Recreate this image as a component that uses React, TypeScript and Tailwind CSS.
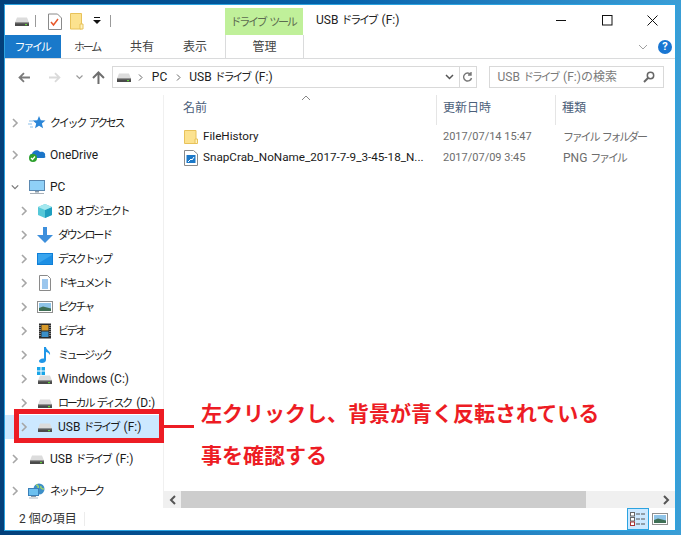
import React from "react";

const T = ({ children }: { children: string }) => (
  <>
    {children.split(/([\u30a0-\u30ff]+(?: [\u30a0-\u30ff]+)*)/).map((p, i) =>
      i % 2 === 1 ? (
        <span key={i} className="text-[11px] tracking-[-2.2px] [word-spacing:3px] pr-[2px]">
          {p}
        </span>
      ) : (
        <span key={i}>{p}</span>
      )
    )}
  </>
);

const Drive = ({ className = "" }: { className?: string }) => (
  <svg width="16" height="16" viewBox="0 0 16 16" className={className}>
    <path d="M3 4.500h10l2 5H1z" fill="#dcdcdc" />
    <path d="M1 9.500h14v3.500H1z" fill="#4a4a4a" />
    <path d="M1 9.500h14v.8H1z" fill="#8a8a8a" />
    <rect x="11" y="11" width="2" height="1.200" fill="#5fd33a" />
  </svg>
);

const Chev = () => (
  <svg width="8" height="10" viewBox="0 0 8 10">
    <path d="M2 1l4 4-4 4" fill="none" stroke="#a6a6a6" strokeWidth="1.600" />
  </svg>
);

const FolderIcon = () => (
  <svg width="14" height="16" viewBox="0 0 14 16">
    <path d="M.5 1.500h11.500v13H.5z" fill="#fce28f" stroke="#e8c25a" />
    <path d="M11 10h2.500v4.500H11z" fill="#fff3c0" stroke="#e8c25a" />
  </svg>
);

const Star = () => (
  <svg width="18" height="16" viewBox="0 0 18 16">
    <path d="M11 1l1.800 4.300 4.700.3-3.600 3 1.200 4.600L11 10.700l-4 2.500 1.200-4.600-3.600-3 4.700-.3z" fill="#2b86d8" />
    <path d="M1 6h4M0 9h4M2 12h3" stroke="#8cc0ea" strokeWidth="1" />
  </svg>
);

const OneDrive = () => (
  <svg width="18" height="16" viewBox="0 0 18 16">
    <path d="M4 11c-3 0-3-4 0-4.300C5 3 10 2 12 5c3-1 6 1 5 4 1 1 0 2-1 2z" fill="#1b75c8" />
    <circle cx="5" cy="11" r="4" fill="#2da02d" />
    <path d="M3 11l1.500 1.500L7 9.500" fill="none" stroke="#fff" strokeWidth="1.200" />
  </svg>
);

const Monitor = () => (
  <svg width="16" height="16" viewBox="0 0 16 16">
    <rect x="0.500" y="1.500" width="15" height="10" fill="#8fd0f7" stroke="#5b88b0" />
    <rect x="6" y="12" width="4" height="1.500" fill="#8a9aa8" />
    <rect x="1" y="14" width="14" height="1" fill="#a8b0b8" />
  </svg>
);

const Cube = () => (
  <svg width="16" height="16" viewBox="0 0 16 16">
    <path d="M8 1l7 3v8l-7 3-7-3V4z" fill="#55c8d8" />
    <path d="M8 7l7-3v8l-7 3z" fill="#1f9fc0" />
    <path d="M1 4l7-3 7 3-7 3z" fill="#a5e8ef" />
  </svg>
);

const ArrowDown = () => (
  <svg width="16" height="16" viewBox="0 0 16 16">
    <path d="M6 0h4v8h6l-8 8-8-8h6z" fill="#3d8fdc" />
  </svg>
);

const Desktop = () => (
  <svg width="16" height="16" viewBox="0 0 16 16">
    <rect x="0" y="2" width="16" height="12" fill="#0f7fd8" />
    <rect x="1" y="3" width="14" height="9.500" fill="#39a5ee" />
    <path d="M1 12.500L15 4v8.500z" fill="#1d8fe4" />
  </svg>
);

const Doc = () => (
  <svg width="16" height="16" viewBox="0 0 16 16">
    <path d="M2.500.5h8l3 3v12h-11z" fill="#fff" stroke="#8a8a8a" />
    <path d="M5 5h6M5 7h6M5 9h6M5 11h6M5 13h6" stroke="#3a8fdc" />
  </svg>
);

const Pic = () => (
  <svg width="16" height="16" viewBox="0 0 16 16">
    <rect x="0.500" y="2.500" width="15" height="11" fill="#fff" stroke="#8f8f8f" />
    <rect x="2" y="4" width="12" height="8" fill="#8fc4e8" />
    <path d="M2 9l4-1.500 8 2V12H2z" fill="#3f6f55" />
  </svg>
);

const Film = () => (
  <svg width="16" height="16" viewBox="0 0 16 16">
    <rect x="2" y="0.500" width="12" height="15" fill="#2b2b2b" />
    <rect x="4.500" y="2" width="7" height="5.500" fill="#d89a2a" />
    <rect x="4.500" y="8.500" width="7" height="5.500" fill="#3a8fc8" />
    <path d="M3 2v12M13 2v12" stroke="#cfcfcf" strokeDasharray="1 1" />
  </svg>
);

const Music = () => (
  <svg width="16" height="16" viewBox="0 0 16 16">
    <path d="M7 0h2c0 3 5 4 4 8-1-2-3-3-4-3v8c0 2-2 3-4 3s-3-1-3-2 2-3 5-2.500z" fill="#1e96e8" />
  </svg>
);

const WinDrive = () => (
  <div className="relative w-4 h-4">
    <Drive />
    <svg width="8" height="8" viewBox="0 0 8 8" className="absolute left-0 -top-1">
      <path d="M0 0h3.500v3.500H0zM4.500 0H8v3.500H4.500zM0 4.500h3.500V8H0zM4.500 4.500H8V8H4.500z" fill="#19a5e8" />
    </svg>
  </div>
);

const Net = () => (
  <svg width="18" height="16" viewBox="0 0 18 16">
    <circle cx="11" cy="6" r="5.500" fill="#3d8fc8" />
    <path d="M8 2c2 0 3 2 2 3s-3 1-3 3M13 3c-1 2 1 3 3 3" fill="none" stroke="#9ed36a" strokeWidth="1.500" />
    <rect x="0.500" y="5.500" width="10" height="7" fill="#6cc0f0" stroke="#3a7fb8" />
    <rect x="3" y="13" width="5" height="1" fill="#8a9aa8" />
    <rect x="1" y="14.500" width="9" height="1" fill="#b0b8c0" />
  </svg>
);

const Row = ({
  indent,
  icon,
  label,
  open,
  selected,
  className = "",
}: {
  indent?: boolean;
  icon: React.ReactNode;
  label: string;
  open?: boolean;
  selected?: boolean;
  className?: string;
}) => (
  <div className={`flex items-center h-6 ${indent ? "pl-[15px]" : "pl-[6px]"} ${selected ? "bg-[#cce8ff]" : ""} ${className}`}>
    <span className="w-[8px] flex justify-center">
      {open ? (
        <svg width="10" height="8" viewBox="0 0 10 8">
          <path d="M1 2l4 4 4-4" fill="none" stroke="#7a7a7a" strokeWidth="1.600" />
        </svg>
      ) : (
        <Chev />
      )}
    </span>
    <span className={`flex justify-center w-[18px] ${indent ? "ml-[8px]" : "ml-[9px]"}`}>{icon}</span>
    <span className="ml-[4px] whitespace-nowrap text-[#1a1a1a]">
      <T>{label}</T>
    </span>
  </div>
);

const files: { name: string; date: string; type: string; icon: React.ReactNode }[] = [
  { name: "FileHistory", date: "2017/07/14 15:47", type: "ファイル フォルダー", icon: <FolderIcon /> },
  {
    name: "SnapCrab_NoName_2017-7-9_3-45-18_N...",
    date: "2017/07/09 3:45",
    type: "PNG ファイル",
    icon: (
      <svg width="14" height="16" viewBox="0 0 14 16">
        <path d="M.5.5h9l4 3.500v11.500H.5z" fill="#fff" stroke="#8a8a8a" />
        <rect x="2.500" y="5" width="9" height="8" fill="#1b78c8" />
        <path d="M4 12l3-3 1 1 2-3" fill="none" stroke="#fff" />
      </svg>
    ),
  },
];

export default function App() {
  return (
    <div
      className="relative w-[681px] h-[535px] overflow-hidden p-[4px] bg-gradient-to-r from-[#03407a] via-[#0563ac] to-[#3a9ed6] text-[12px] leading-none"
      style={{ fontFamily: 'Roboto, "Noto Sans CJK JP", sans-serif' }}
    >
      <div className="flex flex-col w-[672px] h-[527px] bg-white border border-[#2ca3e0]">
        {/* title row */}
        <div className="flex h-[30px] items-end shrink-0">
          <div className="flex items-center h-[30px] w-[220px] pl-[9px] pt-[2px]">
            <Drive />
            <span className="ml-[5px] w-px h-[12px] bg-[#9a9a9a]" />
            <span className="ml-[11px]">
              <svg width="16" height="17" viewBox="0 0 16 17">
                <path d="M1.500 1h9l4 4v11.500h-13z" fill="#fff" stroke="#8a8a8a" />
                <path d="M4 9l2.500 3L11 6" fill="none" stroke="#e8582a" strokeWidth="1.500" />
              </svg>
            </span>
            <span className="ml-[7px]">
              <svg width="14" height="17" viewBox="0 0 14 17">
                <path d="M.5.500h11v15.500H.5z" fill="#fce28f" stroke="#e8c25a" />
                <path d="M10 11h3v5h-3z" fill="#fff3c0" stroke="#e8c25a" />
              </svg>
            </span>
            <span className="ml-[9px]">
              <svg width="8" height="8" viewBox="0 0 8 8">
                <rect x="1" y="0" width="6" height="1" fill="#111" />
                <path d="M0 3h8L4 7z" fill="#111" />
              </svg>
            </span>
            <span className="ml-[9px] w-px h-[12px] bg-[#9a9a9a]" />
          </div>
          <div className="w-[78px] h-[27px] bg-[#c0f09a] flex items-center justify-center text-[#5c6b50] whitespace-nowrap">
            <span><T>ドライブ ツール</T></span>
          </div>
          <div className="ml-[13px] h-[30px] flex items-center text-[#222] flex-1 whitespace-nowrap">
            <span><T>USB ドライブ (F:)</T></span>
          </div>
          <div className="flex items-center h-[30px]">
            <span className="w-[46px] flex justify-center">
              <svg width="11" height="11" viewBox="0 0 11 11"><path d="M0 5.500h10" stroke="#111" /></svg>
            </span>
            <span className="w-[46px] flex justify-center">
              <svg width="11" height="11" viewBox="0 0 11 11"><rect x="0.500" y="0.500" width="9.500" height="9.500" fill="none" stroke="#111" /></svg>
            </span>
            <span className="w-[45px] flex justify-center">
              <svg width="11" height="11" viewBox="0 0 11 11"><path d="M.5.500l10 10M10.500.500l-10 10" stroke="#111" /></svg>
            </span>
          </div>
        </div>
        {/* tabs row */}
        <div className="flex h-[24px] border-b border-[#dadbdc] shrink-0 text-[#444] items-stretch">
          <div className="w-[56px] h-[23px] bg-[#1979ca] text-white flex items-center justify-center"><span><T>ファイル</T></span></div>
          <div className="w-[54px] flex items-center justify-center"><span><T>ホーム</T></span></div>
          <div className="w-[54px] flex items-center justify-center">共有</div>
          <div className="w-[52px] flex items-center justify-center">表示</div>
          <div className="ml-[4px] w-[79px] border-x border-[#dadbdc] flex items-center justify-center">管理</div>
          <div className="flex-1 flex items-center justify-end pr-[3px]">
            <svg width="10" height="6" viewBox="0 0 10 6" className="mr-[10px]">
              <path d="M1 1l4 4 4-4" fill="none" stroke="#a0a0a0" />
            </svg>
            <span className="w-[14px] h-[14px] rounded-full bg-[#1976d2] text-white text-[11px] font-bold flex items-center justify-center">?</span>
          </div>
        </div>
        {/* address row */}
        <div className="flex items-center h-[36px] shrink-0 pl-[13px] pr-[11px]">
          <svg width="13" height="11" viewBox="0 0 13 11"><path d="M12 5.500H2M6 1L1.500 5.500 6 10" fill="none" stroke="#7a7a7a" strokeWidth="1.800" /></svg>
          <svg width="13" height="11" viewBox="0 0 13 11" className="ml-[17px]"><path d="M1 5.500h10M7 1l4.500 4.500L7 10" fill="none" stroke="#dadada" strokeWidth="1.800" /></svg>
          <svg width="7" height="5" viewBox="0 0 7 5" className="ml-[15px]"><path d="M.5.500l3 3 3-3" fill="none" stroke="#9a9a9a" strokeWidth="1.200" /></svg>
          <svg width="13" height="13" viewBox="0 0 13 13" className="ml-[9px]"><path d="M6.500 13V2M1 7l5.500-5.500L12 7" fill="none" stroke="#6e6e6e" strokeWidth="2" /></svg>
          <div className="ml-[7px] w-[366px] h-[22px] border border-[#d9d9d9] flex items-center pl-[3px] text-[#222] whitespace-nowrap">
            <Drive />
            <span className="ml-[6px]"><svg width="5" height="7" viewBox="0 0 5 7"><path d="M1 .5l3 3-3 3" fill="none" stroke="#666" /></svg></span>
            <span className="ml-[9px]">PC</span>
            <span className="ml-[9px]"><svg width="5" height="7" viewBox="0 0 5 7"><path d="M1 .5l3 3-3 3" fill="none" stroke="#666" /></svg></span>
            <span className="ml-[8px]"><T>USB ドライブ (F:)</T></span>
            <span className="ml-auto w-[18px] flex justify-center">
              <svg width="9" height="6" viewBox="0 0 9 6"><path d="M1 1l3.500 3.500L8 1" fill="none" stroke="#555" strokeWidth="1.500" /></svg>
            </span>
            <span className="w-[17px] h-full border-l border-[#d9d9d9] flex items-center justify-center">
              <svg width="11" height="11" viewBox="0 0 11 11"><path d="M8.700 2.500A4 4 0 1 0 9.500 6M9 0v3H6" fill="none" stroke="#777" strokeWidth="1.400" /></svg>
            </span>
          </div>
          <div className="ml-[12px] w-[176px] h-[22px] border border-[#d9d9d9] flex items-center pl-[8px] text-[#7a7a7a] whitespace-nowrap">
            <span><T>USB ドライブ (F:)</T>の検索</span>
            <svg width="12" height="12" viewBox="0 0 12 12" className="ml-auto mr-[8px]"><circle cx="7.500" cy="4.500" r="3.200" fill="none" stroke="#666" strokeWidth="1.500" /><path d="M5 7l-4 4" stroke="#666" strokeWidth="2" /></svg>
          </div>
        </div>
        {/* main */}
        <div className="flex flex-1 min-h-0">
          <div className="w-[159px] shrink-0 border-r border-[#f0f0f0] pt-[16px]">
            <Row icon={<Star />} label="クイック アクセス" />
            <Row className="mt-[8px]" icon={<OneDrive />} label="OneDrive" />
            <Row className="mt-[8px]" open icon={<Monitor />} label="PC" />
            <Row indent icon={<Cube />} label="3D オブジェクト" />
            <Row indent icon={<ArrowDown />} label="ダウンロード" />
            <Row indent icon={<Desktop />} label="デスクトップ" />
            <Row indent icon={<Doc />} label="ドキュメント" />
            <Row indent icon={<Pic />} label="ピクチャ" />
            <Row indent icon={<Film />} label="ビデオ" />
            <Row indent icon={<Music />} label="ミュージック" />
            <Row indent icon={<WinDrive />} label="Windows (C:)" />
            <Row indent icon={<Drive />} label="ローカル ディスク (D:)" />
            <Row indent selected icon={<Drive />} label="USB ドライブ (F:)" />
            <Row className="mt-[8px]" icon={<Drive />} label="USB ドライブ (F:)" />
            <Row className="mt-[8px]" icon={<Net />} label="ネットワーク" />
          </div>
          <div className="flex-1 min-w-0 flex flex-col">
            <div className="flex h-[30px] shrink-0 relative text-[#4c607a]">
              <div className="w-[273px] pl-[19px] pt-[7px] border-r border-[#e5e5e5]">名前</div>
              <svg width="10" height="6" viewBox="0 0 10 6" className="absolute left-[137px] top-0"><path d="M1 5l4-4 4 4" fill="none" stroke="#888" /></svg>
              <div className="w-[119px] pl-[6px] pt-[7px] border-r border-[#e5e5e5]">更新日時</div>
              <div className="pl-[6px] pt-[7px]">種類</div>
            </div>
            <div className="flex-1 pt-[1px]">
              {files.map((r) => (
                <div key={r.name} className="flex items-center h-[21px] whitespace-nowrap">
                  <span className="ml-[20px] w-[14px] flex justify-center">{r.icon}</span>
                  <span className="ml-[5px] w-[240px] text-[11.7px] text-[#1a1a1a]">{r.name}</span>
                  <span className="w-[120px] text-[11px] text-[#6d6d6d]">{r.date}</span>
                  <span className="text-[#6d6d6d]"><T>{r.type}</T></span>
                </div>
              ))}
            </div>
            <div className="h-[17px] bg-[#f0f0f0] flex items-center shrink-0">
              <span className="w-[17px] flex justify-center">
                <svg width="7" height="10" viewBox="0 0 7 10"><path d="M6 1L2 5l4 4" fill="none" stroke="#555" strokeWidth="2" /></svg>
              </span>
              <span className="w-[405px] h-full bg-[#cdcdcd]" />
              <span className="ml-auto w-[17px] flex justify-center">
                <svg width="7" height="10" viewBox="0 0 7 10"><path d="M1 1l4 4-4 4" fill="none" stroke="#555" strokeWidth="2" /></svg>
              </span>
            </div>
          </div>
        </div>
        {/* status */}
        <div className="flex items-center h-[22px] shrink-0 text-[#333]">
          <span className="ml-[14px]">2 個の項目</span>
          <span className="ml-[7px] w-px h-[14px] bg-[#ececec]" />
          <span className="ml-auto w-[22px] h-[22px] bg-[#cce8ff] border border-[#2ca3e0] flex items-center justify-center">
            <svg width="16" height="14" viewBox="0 0 16 14">
              <rect x="0.500" y="0.500" width="4" height="3.500" fill="#fff" stroke="#666" />
              <rect x="0.500" y="5.500" width="4" height="3.500" fill="#fff" stroke="#666" />
              <rect x="0.500" y="10" width="4" height="3.500" fill="#fff" stroke="#a33" />
              <path d="M6 2h4M11 2h4M6 7h4M11 7h4M6 12h4M11 12h4" stroke="#555" />
            </svg>
          </span>
          <span className="ml-[3px] mr-[7px] w-[16px] h-[22px] flex items-center justify-center"><Pic /></span>
        </div>
      </div>
      {/* annotation overlay */}
      <div className="absolute left-[14px] top-[409px] w-[150px] h-[34px] border-[5px] border-[#ed1c24]" />
      <div className="absolute left-[164px] top-[425px] w-[30px] h-[3px] bg-[#ed1c24]" />
      <div
        className="absolute left-[201px] top-[391px] text-[21px] leading-[42px] font-bold text-[#ed1c24] whitespace-nowrap"
        style={{ fontFamily: '"Noto Sans CJK JP", sans-serif' }}
      >
        左クリックし、背景が青く反転されている
        <br />
        事を確認する
      </div>
    </div>
  );
}
